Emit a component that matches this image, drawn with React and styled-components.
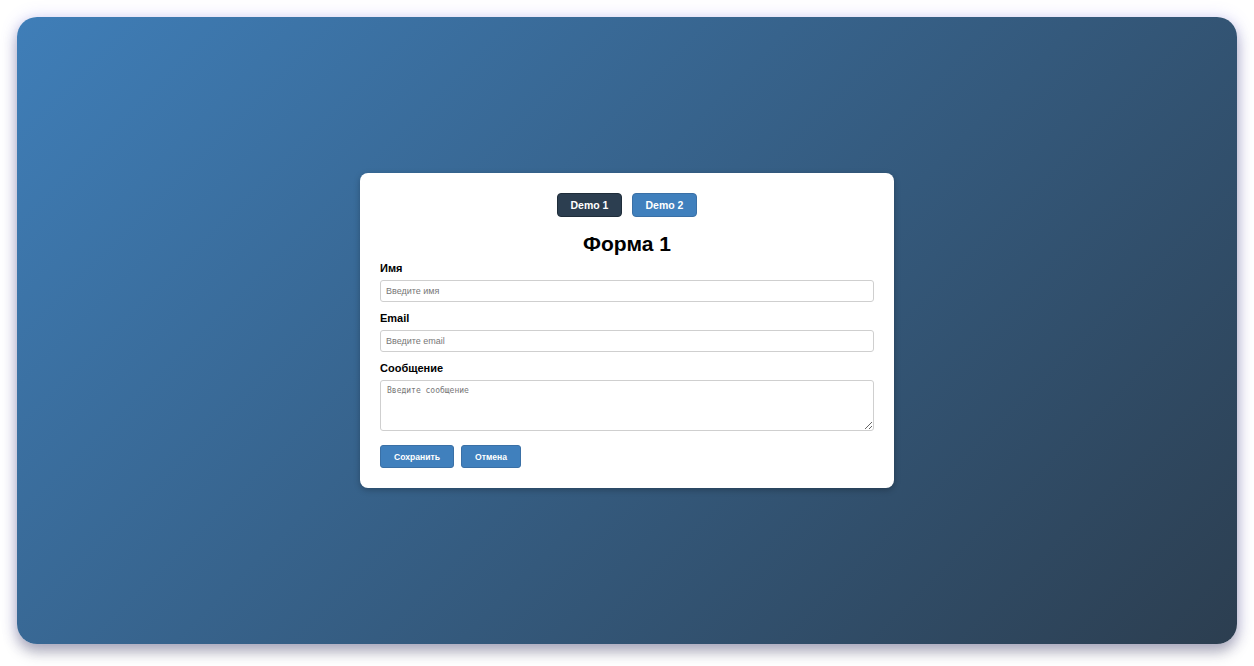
import React, { useState } from "react";
import styled, { createGlobalStyle } from "styled-components";

const Global = createGlobalStyle`
  html, body { margin: 0; padding: 0; background: #ffffff; }
  body { font-family: "Liberation Sans", Arial, sans-serif; }
  * { box-sizing: border-box; }
`;

const Page = styled.div`
  padding: 17px;
  height: 666px;
`;

const Frame = styled.div`
  height: 627px;
  border-radius: 20px;
  background: linear-gradient(135deg, #3f7eb8 0%, #2c3e50 100%);
  box-shadow: 0 8px 14px rgba(40, 40, 60, 0.35), 0 0 16px rgba(120, 110, 255, 0.25);
  display: flex;
  align-items: center;
  justify-content: center;
`;

const Card = styled.div`
  width: 534px;
  background: #ffffff;
  border-radius: 8px;
  padding: 20px;
  box-shadow: 0 2px 6px rgba(0, 0, 0, 0.25);
  display: flex;
  flex-direction: column;
`;

const Tabs = styled.div`
  display: flex;
  justify-content: center;
  gap: 10px;
`;

const TabButton = styled.button`
  height: 24px;
  width: 65px;
  border: 1px solid ${(p) => (p.$active ? "#1f2d3a" : "#3a70a6")};
  border-radius: 4px;
  background: ${(p) => (p.$active ? "#2c3e50" : "#4080bd")};
  color: #ffffff;
  font-family: "Liberation Sans", Arial, sans-serif;
  font-weight: bold;
  font-size: 10.5px;
  padding: 0;
  cursor: pointer;
`;

const Title = styled.h2`
  margin: 13px 0 0;
  text-align: center;
  font-size: 21px;
  font-weight: bold;
  line-height: 28px;
  color: #000;
`;

const Field = styled.div`
  display: flex;
  flex-direction: column;
  margin-top: ${(p) => (p.$first ? "4px" : "10px")};
`;

const Label = styled.label`
  font-size: 11px;
  font-weight: bold;
  line-height: 13px;
  color: #000;
  margin-bottom: 5px;
`;

const Input = styled.input`
  height: 22px;
  border: 1px solid #cfcfcf;
  border-radius: 3px;
  padding: 0 5px;
  font-family: "Liberation Sans", Arial, sans-serif;
  font-size: 9px;
  outline: none;
  &::placeholder { color: #777; }
`;

const TextArea = styled.textarea`
  height: 51px;
  border: 1px solid #cfcfcf;
  border-radius: 3px;
  padding: 5px 6px;
  font-family: "DejaVu Sans Mono", "Liberation Mono", monospace;
  font-size: 8px;
  outline: none;
  resize: vertical;
  &::placeholder { color: #777; }
`;

const Actions = styled.div`
  display: flex;
  gap: 7px;
  margin-top: 14px;
`;

const ActionButton = styled.button`
  height: 23px;
  padding: 0 13px;
  border: 1px solid #3a70a6;
  border-radius: 3px;
  background: #4080bd;
  color: #fff;
  font-family: "Liberation Sans", Arial, sans-serif;
  font-weight: bold;
  font-size: 8.6px;
  cursor: pointer;
`;

export default function App() {
  const [tab, setTab] = useState(1);
  return (
    <>
      <Global />
      <Page>
        <Frame>
          <Card>
            <Tabs>
              <TabButton $active={tab === 1} onClick={() => setTab(1)}>Demo 1</TabButton>
              <TabButton $active={tab === 2} onClick={() => setTab(2)}>Demo 2</TabButton>
            </Tabs>
            <Title>Форма {tab}</Title>
            <Field $first>
              <Label>Имя</Label>
              <Input placeholder="Введите имя" />
            </Field>
            <Field>
              <Label>Email</Label>
              <Input placeholder="Введите email" />
            </Field>
            <Field>
              <Label>Сообщение</Label>
              <TextArea placeholder="Введите сообщение" />
            </Field>
            <Actions>
              <ActionButton>Сохранить</ActionButton>
              <ActionButton>Отмена</ActionButton>
            </Actions>
          </Card>
        </Frame>
      </Page>
    </>
  );
}
